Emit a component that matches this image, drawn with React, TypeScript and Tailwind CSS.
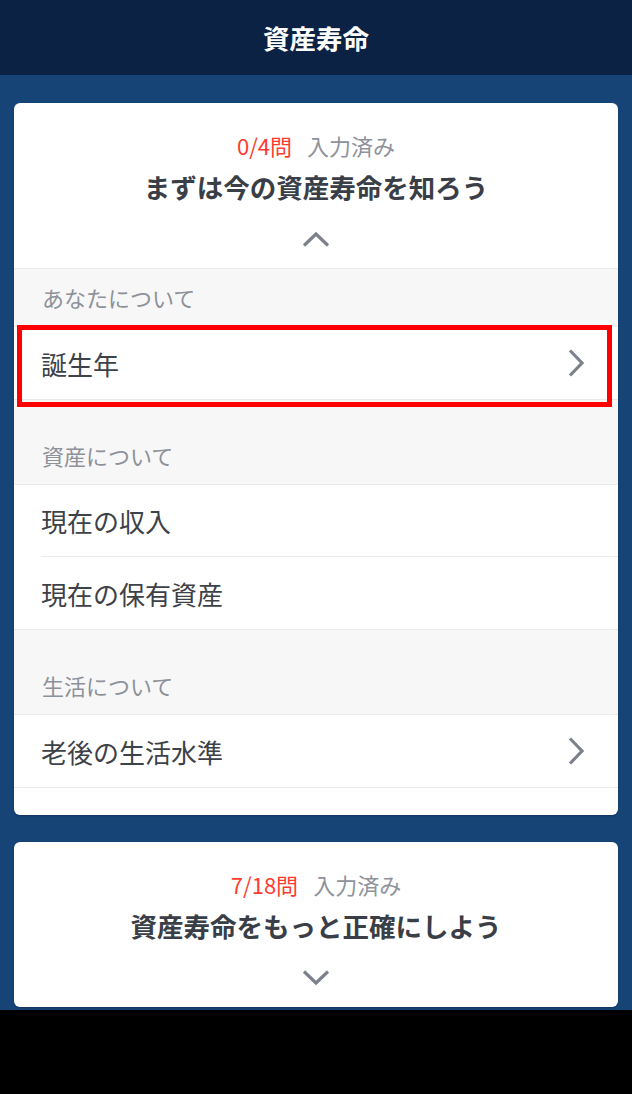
import React from "react";

const font = { fontFamily: '"Noto Sans CJK JP", "Noto Sans", sans-serif' };

function ChevronUp() {
  return (
    <svg width="28" height="16" viewBox="0 0 28 16" fill="none">
      <path d="M2 14.5 L14 3 L26 14.5" stroke="#7c818b" strokeWidth="3.2" strokeLinejoin="miter" />
    </svg>
  );
}

function ChevronDown() {
  return (
    <svg width="28" height="16" viewBox="0 0 28 16" fill="none">
      <path d="M2 1.5 L14 13 L26 1.5" stroke="#7c818b" strokeWidth="3.2" strokeLinejoin="miter" />
    </svg>
  );
}

function ChevronRight() {
  return (
    <svg width="16" height="28" viewBox="0 0 16 28" fill="none">
      <path d="M2 1.5 L14 14 L2 26.5" stroke="#7c818b" strokeWidth="3.2" strokeLinejoin="miter" />
    </svg>
  );
}

function CardHead({ done, total, title, open }: { done: number; total: number; title: string; open: boolean }) {
  return (
    <div className="flex h-[165px] flex-col items-center pt-[27px]">
      <div className="flex items-center text-[22px] leading-[30px]">
        <span className="text-[#ff3b30]">
          {done}/{total}問
        </span>
        <span className="ml-[15px] text-[#8e929b]">入力済み</span>
      </div>
      <div className="mt-[10px] text-[26.5px] font-bold leading-[34px] text-[#3a3e46]">{title}</div>
      <div className="mt-[27px]">{open ? <ChevronUp /> : <ChevronDown />}</div>
    </div>
  );
}

type Row = { label: string; arrow?: boolean; highlight?: boolean };

function Section({ title, rows }: { title: string; rows: Row[] }) {
  return (
    <div className="mb-[27px]">
      <div className="flex h-[57px] items-center pl-[28px] text-[22px] text-[#8d9199]">{title}</div>
      <div className="border-y border-[#ebebec] bg-white">
        {rows.map((r, i) => (
          <div key={r.label} className="relative pl-[27px]">
            <div
              className={
                "flex h-[72px] items-center justify-between pr-[34px] " +
                (i < rows.length - 1 ? "border-b border-[#ebebec]" : "")
              }
            >
              <span className="text-[26px] text-[#3d4148]">{r.label}</span>
              {r.arrow ? <ChevronRight /> : null}
            </div>
            {r.highlight ? (
              <div className="pointer-events-none absolute left-[3px] right-[6px] top-[-2px] h-[82px] border-[5px] border-[#ff0000]" />
            ) : null}
          </div>
        ))}
      </div>
    </div>
  );
}

export default function App() {
  return (
    <div className="flex min-h-[1094px] flex-col bg-black" style={font}>
      <header className="flex h-[75px] items-center justify-center bg-[#0b2244]">
        <h1 className="text-[26.5px] font-bold text-white">資産寿命</h1>
      </header>
      <main className="flex flex-col gap-[27px] bg-[#164477] px-[14px] pb-[3px] pt-[28px]">
        <div className="rounded-[6px] bg-white shadow-[0_1px_2px_rgba(0,0,0,0.25)]">
          <div className="border-b border-[#ebebec]">
            <CardHead done={0} total={4} title="まずは今の資産寿命を知ろう" open />
          </div>
          <div className="rounded-b-[6px] bg-[#f7f7f7]">
            <Section title="あなたについて" rows={[{ label: "誕生年", arrow: true, highlight: true }]} />
            <Section title="資産について" rows={[{ label: "現在の収入" }, { label: "現在の保有資産" }]} />
            <Section title="生活について" rows={[{ label: "老後の生活水準", arrow: true }]} />
          </div>
        </div>
        <div className="rounded-[6px] bg-white shadow-[0_1px_2px_rgba(0,0,0,0.25)]">
          <CardHead done={7} total={18} title="資産寿命をもっと正確にしよう" open={false} />
        </div>
      </main>
      <div className="flex-1 bg-black" />
    </div>
  );
}
